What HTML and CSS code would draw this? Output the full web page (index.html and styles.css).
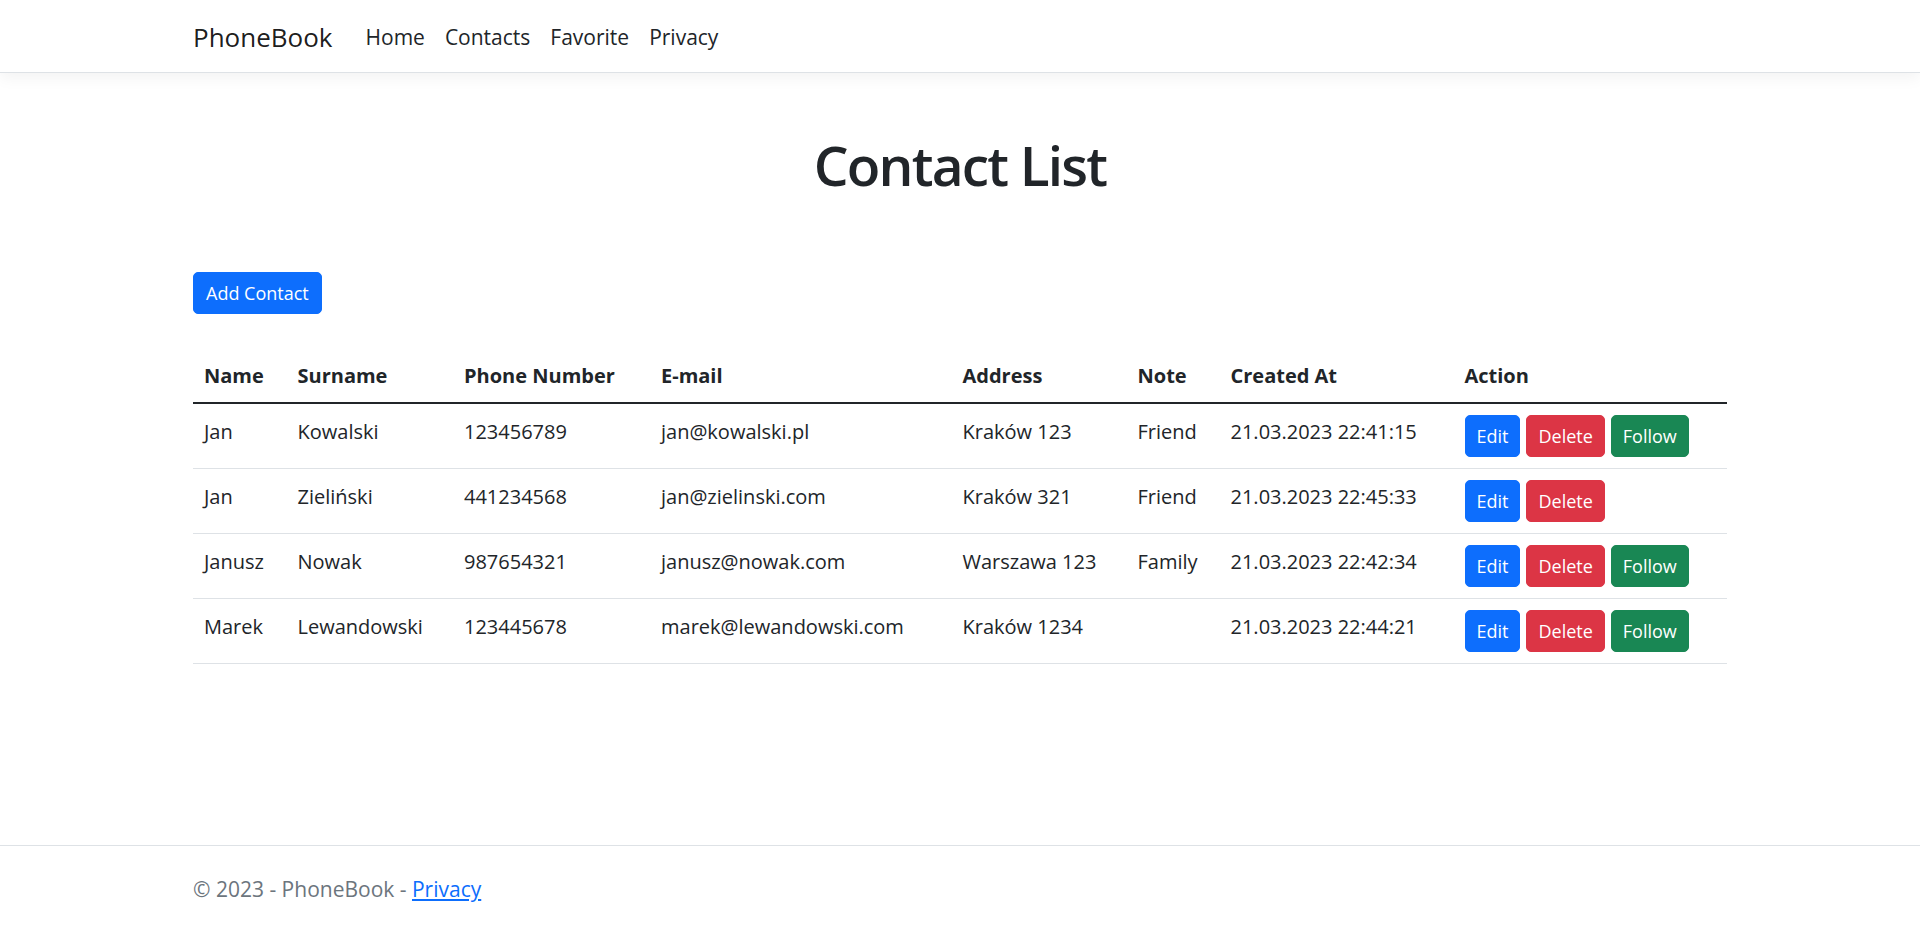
FILE: index.html
```html
<!DOCTYPE html>
<html lang="en">
<head>
<meta charset="utf-8">
<title>Contact List - PhoneBook</title>
<link rel="stylesheet" href="styles.css">
</head>
<body>
<div class="page">
  <header class="navbar">
    <div class="container nav-inner">
      <a class="brand" href="#">PhoneBook</a>
      <nav class="nav-links">
        <a class="nav-link" href="#">Home</a>
        <a class="nav-link" href="#">Contacts</a>
        <a class="nav-link" href="#">Favorite</a>
        <a class="nav-link" href="#">Privacy</a>
      </nav>
    </div>
  </header>

  <main class="container main">
    <h1 class="title">Contact List</h1>
    <div class="toolbar">
      <a class="btn btn-primary btn-add" href="#">Add Contact</a>
    </div>
    <table class="table">
      <thead>
        <tr>
          <th class="c-name">Name</th>
          <th class="c-surname">Surname</th>
          <th class="c-phone">Phone Number</th>
          <th class="c-email">E-mail</th>
          <th class="c-address">Address</th>
          <th class="c-note">Note</th>
          <th class="c-created">Created At</th>
          <th class="c-action">Action</th>
        </tr>
      </thead>
      <tbody>
        <tr>
          <td>Jan</td>
          <td>Kowalski</td>
          <td>123456789</td>
          <td>jan@kowalski.pl</td>
          <td>Kraków 123</td>
          <td>Friend</td>
          <td>21.03.2023 22:41:15</td>
          <td class="cell-action"><div class="actions"><a class="btn btn-primary" href="#">Edit</a><a class="btn btn-danger" href="#">Delete</a><a class="btn btn-success" href="#">Follow</a></div></td>
        </tr>
        <tr>
          <td>Jan</td>
          <td>Zieliński</td>
          <td>441234568</td>
          <td>jan@zielinski.com</td>
          <td>Kraków 321</td>
          <td>Friend</td>
          <td>21.03.2023 22:45:33</td>
          <td class="cell-action"><div class="actions"><a class="btn btn-primary" href="#">Edit</a><a class="btn btn-danger" href="#">Delete</a></div></td>
        </tr>
        <tr>
          <td>Janusz</td>
          <td>Nowak</td>
          <td>987654321</td>
          <td>janusz@nowak.com</td>
          <td>Warszawa 123</td>
          <td>Family</td>
          <td>21.03.2023 22:42:34</td>
          <td class="cell-action"><div class="actions"><a class="btn btn-primary" href="#">Edit</a><a class="btn btn-danger" href="#">Delete</a><a class="btn btn-success" href="#">Follow</a></div></td>
        </tr>
        <tr>
          <td>Marek</td>
          <td>Lewandowski</td>
          <td>123445678</td>
          <td>marek@lewandowski.com</td>
          <td>Kraków 1234</td>
          <td></td>
          <td>21.03.2023 22:44:21</td>
          <td class="cell-action"><div class="actions"><a class="btn btn-primary" href="#">Edit</a><a class="btn btn-danger" href="#">Delete</a><a class="btn btn-success" href="#">Follow</a></div></td>
        </tr>
      </tbody>
    </table>
  </main>

  <footer class="footer">
    <div class="container">
      &copy; 2023 - PhoneBook - <a class="footer-link" href="#">Privacy</a>
    </div>
  </footer>
</div>
</body>
</html>
```

FILE: styles.css
```css
* {
  box-sizing: border-box;
}

html, body {
  margin: 0;
  padding: 0;
}

body {
  font-family: "Open Sans", "Noto Sans", "Liberation Sans", sans-serif;
  font-size: 20px;
  line-height: 30px;
  color: #212529;
  background: #fff;
}

.page {
  min-height: 100vh;
  display: flex;
  flex-direction: column;
}

.container {
  width: 1534px;
  margin: 0 auto;
}

/* Navbar */
.navbar {
  height: 73px;
  background: #fff;
  border-bottom: 1px solid #dee2e6;
  box-shadow: 0 5px 15px rgba(0, 0, 0, 0.05);
  display: flex;
  align-items: center;
}

.nav-inner {
  display: flex;
  align-items: center;
  padding-top: 1px;
}

.brand {
  font-size: 26px;
  line-height: 38px;
  color: rgba(0, 0, 0, 0.9);
  text-decoration: none;
  margin-right: 23px;
}

.nav-links {
  display: flex;
  align-items: center;
}

.nav-link {
  font-size: 21px;
  color: #212529;
  text-decoration: none;
  padding: 0 10px;
}

/* Main */
.main {
  flex: 0 0 auto;
}

.title {
  margin: 58px 0 0;
  text-align: center;
  font-size: 55px;
  line-height: 67px;
  font-weight: 600;
  letter-spacing: -1.8px;
}

.toolbar {
  margin-top: 74px;
  display: flex;
}

.btn {
  display: inline-block;
  font-size: 18px;
  line-height: 27px;
  padding: 6.5px 11px;
  border: 1px solid transparent;
  border-radius: 5px;
  color: #fff;
  text-decoration: none;
  text-align: center;
}

.btn-add {
  padding-left: 12px;
  padding-right: 12px;
}

.btn-primary {
  background: #0d6efd;
  border-color: #0d6efd;
}

.btn-danger {
  background: #dc3545;
  border-color: #dc3545;
}

.btn-success {
  background: #198754;
  border-color: #198754;
}

/* Table */
.table {
  margin-top: 36px;
  width: 100%;
  border-collapse: collapse;
  table-layout: fixed;
}

.table th,
.table td {
  padding: 11px;
  text-align: left;
  vertical-align: top;
  white-space: nowrap;
}

.table th {
  font-weight: 700;
  border-bottom: 2px solid #212529;
}

.table td {
  padding-top: 13px;
  border-bottom: 1px solid #dee2e6;
}

.table td.cell-action {
  padding-top: 11px;
}

.c-name { width: 93.5px; }
.c-surname { width: 166.5px; }
.c-phone { width: 197px; }
.c-email { width: 301.5px; }
.c-address { width: 175px; }
.c-note { width: 93px; }
.c-created { width: 234px; }
.c-action { width: 273.5px; }

.actions {
  display: flex;
  gap: 6px;
}

/* Footer */
.footer {
  margin-top: auto;
  border-top: 1px solid #dee2e6;
  color: #6c757d;
  font-size: 21px;
  padding: 28px 0 21px;
  white-space: nowrap;
}

.footer-link {
  color: #0d6efd;
  text-decoration: underline;
}
```
